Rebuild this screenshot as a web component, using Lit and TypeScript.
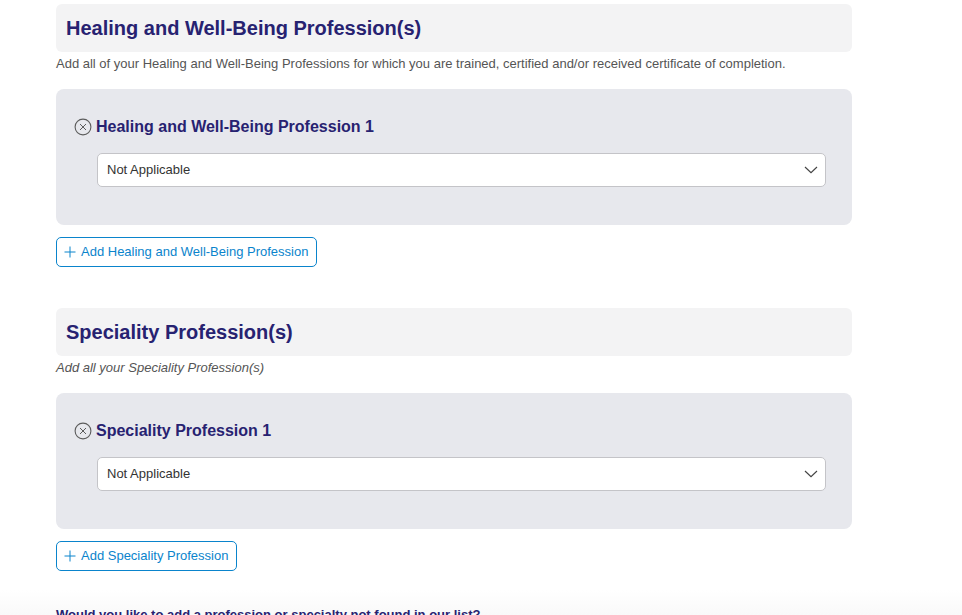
import { LitElement, html, css } from "lit";
import { customElement } from "lit/decorators.js";

const removeIcon = html`<svg class="remove" viewBox="0 0 18 18" width="18" height="18" fill="none" stroke="#5c5c5c" aria-hidden="true">
  <circle cx="9" cy="9" r="7.9" stroke-width="1.1"></circle>
  <path d="M6 6l6 6M12 6l-6 6" stroke-width="1"></path>
</svg>`;
const plusIcon = html`<svg class="plus" viewBox="0 0 12 12" width="12" height="12" fill="none" stroke="#0a84cc" stroke-width="1" aria-hidden="true">
  <path d="M6 .5v11M.5 6h11"></path>
</svg>`;
const chevron = html`<svg class="chev" viewBox="0 0 14 8" width="14" height="8" fill="none" stroke="#444" stroke-width="1.2" aria-hidden="true">
  <path d="M1 1l6 5.6 6-5.6"></path>
</svg>`;

@customElement("app-root")
export class AppRoot extends LitElement {
  static styles = css`
    :host {
      display: block;
      height: 615px;
      overflow: hidden;
      background: linear-gradient(#fff, #f9f9f9) left bottom / 100% 25px no-repeat #fff;
      font-family: "Liberation Sans", Arial, sans-serif;
    }
    .page {
      width: 796px;
      margin-left: 56px;
      padding-top: 4px;
      display: flex;
      flex-direction: column;
    }
    section {
      display: flex;
      flex-direction: column;
      align-items: flex-start;
    }
    section + section {
      margin-top: 41px;
    }
    .head {
      align-self: stretch;
      height: 48px;
      box-sizing: border-box;
      padding-left: 10px;
      display: flex;
      align-items: center;
      background: #f3f3f4;
      border-radius: 6px;
    }
    h2 {
      margin: 0;
      font-size: 20px;
      font-weight: 700;
      color: #272271;
    }
    .desc {
      margin: 0;
      height: 22px;
      line-height: 23px;
      font-size: 13px;
      color: #555;
    }
    .desc.it { font-style: italic; }
    .card {
      align-self: stretch;
      margin-top: 15px;
      height: 136px;
      box-sizing: border-box;
      padding: 28px 26px 0 18px;
      background: #e7e8ed;
      border-radius: 8px;
    }
    .title {
      display: flex;
      align-items: center;
      gap: 4px;
      height: 19px;
    }
    h3 {
      margin: 0;
      font-size: 16px;
      font-weight: 700;
      color: #272271;
    }
    .select {
      margin: 17px 0 0 23px;
      height: 34px;
      box-sizing: border-box;
      padding: 0 7px 0 9px;
      display: flex;
      align-items: center;
      justify-content: space-between;
      background: #fff;
      border: 1px solid #c4c4c8;
      border-radius: 5px;
      font-size: 13px;
      color: #333;
    }
    .label {
      margin-bottom: 2px;
    }
    .add {
      margin-top: 12px;
      height: 30px;
      box-sizing: border-box;
      padding: 0 8px 0 7px;
      display: flex;
      align-items: center;
      gap: 5px;
      background: #fff;
      border: 1px solid #0a84cc;
      border-radius: 5px;
      font: 13px "Liberation Sans", Arial, sans-serif;
      color: #0a84cc;
    }
    .more {
      margin: 37px 0 0;
      font-size: 13px;
      font-weight: 700;
      line-height: 14px;
      color: #272271;
    }
  `;

  private block(heading: string, desc: string, italic: boolean, item: string, add: string) {
    return html`<section>
      <div class="head"><h2>${heading}</h2></div>
      <p class="desc ${italic ? "it" : ""}">${desc}</p>
      <div class="card">
        <div class="title">${removeIcon}<h3>${item}</h3></div>
        <div class="select"><span class="label">Not Applicable</span>${chevron}</div>
      </div>
      <button class="add">${plusIcon}<span class="label">${add}</span></button>
    </section>`;
  }

  render() {
    return html`<div class="page">
      ${this.block(
        "Healing and Well-Being Profession(s)",
        "Add all of your Healing and Well-Being Professions for which you are trained, certified and/or received certificate of completion.",
        false,
        "Healing and Well-Being Profession 1",
        "Add Healing and Well-Being Profession"
      )}
      ${this.block(
        "Speciality Profession(s)",
        "Add all your Speciality Profession(s)",
        true,
        "Speciality Profession 1",
        "Add Speciality Profession"
      )}
      <p class="more">Would you like to add a profession or specialty not found in our list?</p>
    </div>`;
  }
}
